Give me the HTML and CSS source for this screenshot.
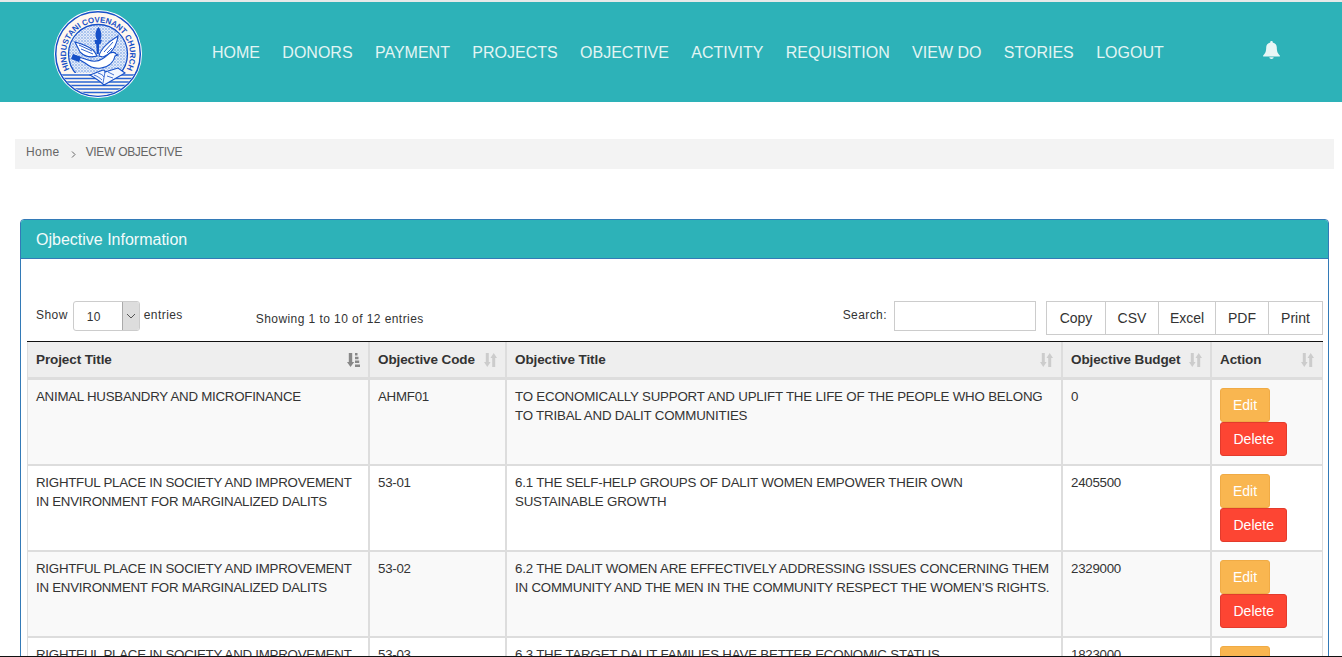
FILE: index.html
```html
<!DOCTYPE html>
<html lang="en">
<head>
<meta charset="utf-8">
<title>View Objective</title>
<link rel="stylesheet" href="styles.css">
</head>
<body>
<svg class="defs" width="0" height="0" aria-hidden="true">
  <defs>
    <symbol id="sort" viewBox="0 0 13 14">
      <path d="M1.800 0h3v9h1.800L3.300 14 0 9h1.800z"/>
      <path d="M9.700 0L13 5h-1.800v9h-3V5H6.500z"/>
    </symbol>
    <symbol id="sort-asc" viewBox="0 0 13 14">
      <path d="M1.800 0h3.400v9h2L3.500 14 0 9h1.800z"/>
      <path d="M8 0h2.500v2.500H8zM8 3.700h3.500v2.500H8zM8 7.500h4.200V10H8zM8 11.500h5V14H8z"/>
    </symbol>
  </defs>
</svg>
<header class="topbar">
  <a class="logo" href="#">
    <svg width="88" height="88" viewBox="0 0 88 88">
      <defs>
        <path id="ring" d="M15.700 59.400A32 32 0 1 1 72.300 59.400"/>
        <pattern id="stip" width="3" height="3" patternUnits="userSpaceOnUse">
          <rect width="3" height="3" fill="#e4ecfa"/>
          <circle cx="1" cy="1" r=".7" fill="#4a80da"/>
          <circle cx="2.500" cy="2.300" r=".45" fill="#7ba2e4"/>
        </pattern>
        <clipPath id="lower"><circle cx="44" cy="44" r="41.500"/></clipPath>
      </defs>
      <circle cx="44" cy="44" r="44" fill="#fff"/>
      <circle cx="44" cy="44" r="42.300" fill="#fff7ee" stroke="#1650c8" stroke-width="1.500"/>
      <text class="logo-text" textLength="131" lengthAdjust="spacing"><textPath href="#ring" startOffset="0">HINDUSTANI COVENANT CHURCH</textPath></text>
      <circle cx="44" cy="44" r="29.500" fill="url(#stip)" stroke="#1650c8" stroke-width="1.300"/>
      <g clip-path="url(#lower)">
        <rect x="0" y="63" width="88" height="25" fill="#fdf8f2"/>
        <path d="M0 65h88M0 68.500h88M0 72h88M0 75.500h88M0 79h88M0 82.500h88" stroke="#2a65d2" stroke-width="1.600"/>
      </g>
      <path d="M43 30c-2.500-4-2-9 1.500-13 2.500 3.500 4 8 2 13z" fill="#1650c8"/>
      <path d="M40.500 30h7.500l-1.500 4h-1.300l-.4 10h-2l-.6-10h-1z" fill="#1650c8"/>
      <path d="M21 32c7 2 13 4 18 8 2 2 3 4 4 6-7 2-13 0-17-4z" fill="#fff" stroke="#1650c8" stroke-width="1.100"/>
      <path d="M25 35l13 6M27 39l12 5" stroke="#1650c8" stroke-width=".9"/>
      <path d="M45 46c1-5 7-13 19-20-1 7-4 13-8 17-2 2-5 3-7 4z" fill="#fff" stroke="#1650c8" stroke-width="1.100"/>
      <path d="M50 42l9-10M53 43l5-5" stroke="#1650c8" stroke-width=".9"/>
      <path d="M19 45l15 5c6 2 11 1 14-1 4-2 6-5 8-6 2-1 5-1 6 1l2 1-3 1c-1 6-6 11-14 12-8 1-12-2-16-5l-5-3z" fill="#fff" stroke="#1650c8" stroke-width="1.100"/>
      <path d="M19 44l8 3-2 5-8-3z" fill="#1650c8"/>
      <path d="M36 65l13-5c1 0 2 1 2 2l13-4 7 5-21 12c-4-4-9-7-14-10z" fill="#f3f7ff" stroke="#1650c8" stroke-width="1.100"/>
      <path d="M51 62l-2 11M40 65c3 1 6 3 8 5M44 63c3 1 5 2 6 4M54 62l6 3M53 66l6 2" stroke="#1650c8" stroke-width=".8" fill="none"/>
    </svg>
  </a>
  <nav class="mainnav">
    <a href="#">HOME</a>
    <a href="#">DONORS</a>
    <a href="#">PAYMENT</a>
    <a href="#">PROJECTS</a>
    <a href="#">OBJECTIVE</a>
    <a href="#">ACTIVITY</a>
    <a href="#">REQUISITION</a>
    <a href="#">VIEW DO</a>
    <a href="#">STORIES</a>
    <a href="#">LOGOUT</a>
  </nav>
  <a class="bell" href="#" aria-label="Notifications">
    <svg width="17" height="18" viewBox="0 0 17 18"><path d="M8.500 0a1.200 1.200 0 0 1 1.200 1.500C12.300 2 13.800 4 13.800 6.500c0 4.500 1.200 6 3 8 .4.500 0 1-.5 1H.7c-.5 0-.9-.5-.5-1 1.800-2 3-3.500 3-8 0-2.500 1.500-4.500 4.100-5A1.200 1.200 0 0 1 8.500 0z"/><path d="M6.300 16.300h4.400a2.200 1.700 0 0 1-4.400 0z"/></svg>
  </a>
</header>

<ol class="breadcrumb">
  <li class="crumb-home"><a href="#">Home</a></li>
  <li class="sep" aria-hidden="true">
    <svg width="5" height="7" viewBox="0 0 5 7"><path d="M1 .5L4 3.500 1 6.500" fill="none" stroke="#666" stroke-width="1"/></svg>
  </li>
  <li class="crumb-page">VIEW OBJECTIVE</li>
</ol>

<section class="panel">
  <h2 class="panel-title">Ojbective Information</h2>
  <div class="panel-body">
    <div class="controls">
      <label class="length">Show
        <span class="fakeselect"><span class="val">10</span><span class="arrow"><svg width="10" height="6" viewBox="0 0 10 6"><path d="M1 1l4 4 4-4" fill="none" stroke="#555" stroke-width="1"/></svg></span></span>
        entries</label>
      <div class="info">Showing 1 to 10 of 12 entries</div>
      <label class="search">Search: <input type="text" class="search-input"></label>
      <div class="btns">
        <button class="dt-btn">Copy</button><button class="dt-btn">CSV</button><button class="dt-btn">Excel</button><button class="dt-btn">PDF</button><button class="dt-btn">Print</button>
      </div>
    </div>
    <table class="grid">
      <colgroup><col class="c1"><col class="c2"><col class="c3"><col class="c4"><col class="c5"></colgroup>
      <thead>
        <tr>
          <th><span class="th-in">Project Title<svg class="ic-active"><use href="#sort-asc"/></svg></span></th>
          <th><span class="th-in">Objective Code<svg class="ic"><use href="#sort"/></svg></span></th>
          <th><span class="th-in">Objective Title<svg class="ic"><use href="#sort"/></svg></span></th>
          <th><span class="th-in">Objective Budget<svg class="ic"><use href="#sort"/></svg></span></th>
          <th><span class="th-in">Action<svg class="ic"><use href="#sort"/></svg></span></th>
        </tr>
      </thead>
      <tbody>
        <tr>
          <td>ANIMAL HUSBANDRY AND MICROFINANCE</td>
          <td>AHMF01</td>
          <td class="obj-title">TO ECONOMICALLY SUPPORT AND UPLIFT THE LIFE OF THE PEOPLE WHO BELONG TO TRIBAL AND DALIT COMMUNITIES</td>
          <td>0</td>
          <td><a class="btn edit" href="#">Edit</a><a class="btn del" href="#">Delete</a></td>
        </tr>
        <tr>
          <td>RIGHTFUL PLACE IN SOCIETY AND IMPROVEMENT IN ENVIRONMENT FOR MARGINALIZED DALITS</td>
          <td>53-01</td>
          <td class="obj-title">6.1 THE SELF-HELP GROUPS OF DALIT WOMEN EMPOWER THEIR OWN SUSTAINABLE GROWTH</td>
          <td>2405500</td>
          <td><a class="btn edit" href="#">Edit</a><a class="btn del" href="#">Delete</a></td>
        </tr>
        <tr>
          <td>RIGHTFUL PLACE IN SOCIETY AND IMPROVEMENT IN ENVIRONMENT FOR MARGINALIZED DALITS</td>
          <td>53-02</td>
          <td class="obj-title">6.2 THE DALIT WOMEN ARE EFFECTIVELY ADDRESSING ISSUES CONCERNING THEM IN COMMUNITY AND THE MEN IN THE COMMUNITY RESPECT THE WOMEN’S RIGHTS.</td>
          <td>2329000</td>
          <td><a class="btn edit" href="#">Edit</a><a class="btn del" href="#">Delete</a></td>
        </tr>
        <tr>
          <td>RIGHTFUL PLACE IN SOCIETY AND IMPROVEMENT IN ENVIRONMENT FOR MARGINALIZED DALITS</td>
          <td>53-03</td>
          <td class="obj-title">6.3 THE TARGET DALIT FAMILIES HAVE BETTER ECONOMIC STATUS</td>
          <td>1823000</td>
          <td><a class="btn edit" href="#">Edit</a><a class="btn del" href="#">Delete</a></td>
        </tr>
      </tbody>
    </table>
  </div>
</section>
<div class="viewport-line"></div>
</body>
</html>
```
FILE: styles.css
```css
* { box-sizing: border-box; }
html, body { margin: 0; padding: 0; height: 657px; overflow: hidden; background: #fff; }
body { font-family: "Liberation Sans", Arial, sans-serif; font-size: 13px; color: #333; line-height: 19px; }
a { text-decoration: none; color: inherit; }
.defs { display: block; height: 0; }

.topbar { display: flex; align-items: center; height: 102px; border-top: 2px solid #e6e9e9; background: #2db2b8; }
.logo { display: block; width: 88px; height: 88px; margin: 4px 58.800px 0 54px; flex: none; }
.logo svg { display: block; }
.logo-text { font: bold 8px "Liberation Sans", sans-serif; fill: #1650c8; }
.mainnav { display: flex; padding-top: 1px; }
.mainnav a { padding: 0 11.200px; font-size: 16px; line-height: 20px; color: #e3f5f4; }
.bell { margin: 0 62px 4px auto; display: block; height: 18px; }
.bell svg { display: block; fill: #e8f6f6; }

.breadcrumb { display: flex; align-items: center; height: 30px; margin: 37px 8px 0 15px; padding: 0 11px 4px; list-style: none; background: #f3f3f3; font-size: 12px; color: #666; }
.crumb-home { letter-spacing: .4px; }
.crumb-page { letter-spacing: -.3px; }
.breadcrumb .sep { display: flex; margin: 5px 10px 0 11px; }

.panel { margin: 50px 13px 0 20px; border: 1px solid #337ab7; border-radius: 4px; }
.panel-title { margin: 0; height: 39px; padding: 0 15px; font-size: 16px; font-weight: normal; line-height: 39px; color: #f2fbfb; background: #2db2b8; border-bottom: 1px solid #337ab7; border-radius: 3px 3px 0 0; }
.panel-body { padding: 42px 5px 0 6px; }

.controls { display: flex; align-items: flex-start; height: 40px; font-size: 12px; letter-spacing: .43px; }
.length { display: flex; align-items: flex-start; height: 30px; margin-left: 9px; gap: 4px; line-height: 29px; }
.fakeselect { display: flex; width: 67px; height: 30px; margin-left: 1px; border: 1px solid #ccc; border-radius: 3px; background: #fff; overflow: hidden; letter-spacing: .4px; }
.val { flex: 1; padding-left: 13px; line-height: 30px; }
.arrow { display: flex; align-items: center; justify-content: center; width: 17px; background: #ddd; border-left: 1px solid #aaa; }
.info { margin: 9px 0 0 73px; line-height: 19px; }
.search { display: flex; align-items: flex-start; gap: 7px; height: 30px; margin-left: auto; line-height: 29px; }
.search-input { width: 142px; height: 30px; border: 1px solid #ccc; background: #fff; padding: 0 6px; }
.btns { display: grid; grid-template-columns: 59px 53px 57px 53px 55px; margin-left: 10px; width: 277px; }
.dt-btn { width: calc(100% + 1px); height: 34px; padding: 0; background: #fff; border: 1px solid #ccc; font: 14px/20px "Liberation Sans", sans-serif; letter-spacing: 0; color: #333; }
.dt-btn:last-child { width: 100%; }

.grid { table-layout: fixed; width: 1296px; border-collapse: separate; border-spacing: 0; border-top: 1px solid #111; font-size: 13.300px; letter-spacing: -.25px; }
.c1 { width: 343px; } .c2 { width: 137px; } .c3 { width: 556px; } .c4 { width: 149px; } .c5 { width: 111px; }
.grid th, .grid td { padding: 8px; border-right: 2px solid #ddd; vertical-align: top; text-align: left; }
.grid th:first-child, .grid td:first-child { border-left: 1px solid #ddd; }
.grid th:last-child, .grid td:last-child { border-right: 1px solid #ddd; }
.grid th { background: #eee; border-bottom: 3px solid #ddd; font-size: 13.500px; font-weight: bold; height: 38px; letter-spacing: -.1px; }
.grid td { padding-top: 7px; border-bottom: 2px solid #ddd; height: 86px; }
.grid td.obj-title { letter-spacing: -.19px; }
.grid tbody tr:nth-child(odd) td { background: #f9f9f9; }
.th-in { display: flex; align-items: center; justify-content: space-between; }
.ic, .ic-active { width: 13px; height: 14px; flex: none; }
.ic { fill: #ccc; }
.ic-active { fill: #888; }

.btn { display: block; width: max-content; height: 34px; padding: 0 12px; border: 1px solid; border-radius: 3px; font-size: 14px; letter-spacing: 0; line-height: 32px; color: #fff; }
.edit { margin-top: 1px; background: #f9b650; border-color: #f0ab45; }
.del { padding: 0 12.500px; background: #fd4533; border-color: #e33b2c; }

.viewport-line { position: fixed; left: 0; right: 0; bottom: 0; height: 1px; background: #111; }
```
